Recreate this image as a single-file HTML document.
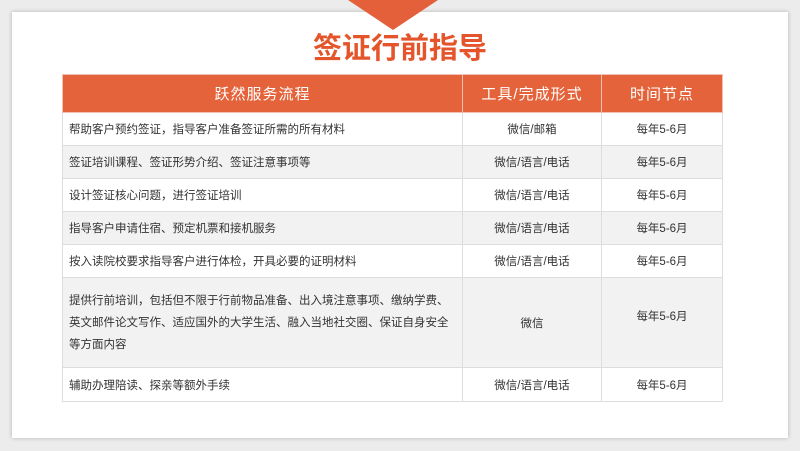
<!DOCTYPE html>
<html><head><meta charset="utf-8"><style>
body{margin:0;width:800px;height:451px;background:#ececec;position:relative;overflow:hidden;font-family:"Liberation Sans","Noto Sans CJK SC",sans-serif}
.card{position:absolute;left:12px;top:12px;width:776px;height:426px;background:#fff;box-shadow:0 0 4px rgba(0,0,0,.25)}
.tri{position:absolute;left:348px;top:0;width:0;height:0;border-left:45px solid transparent;border-right:45px solid transparent;border-top:30px solid #e4603a}
h1{position:absolute;left:0;width:800px;top:32px;margin:0;text-align:center;font-size:29px;font-weight:bold;color:#e4552c;line-height:34px;letter-spacing:0px}
table{position:absolute;left:62px;top:74px;width:661px;border-collapse:collapse;font-size:11.5px;color:#333}
td,th{border:1px solid #ddd;padding:0 6px}
th{background:#e4633b;color:#fff;font-weight:normal;font-size:15px;height:37px;border-color:#f0c0b0;letter-spacing:1px}
td{height:32px}
td.c{text-align:center}
tr.g td{background:#f2f2f2}
</style></head><body>
<div class="card"></div>
<div class="tri"></div>
<h1>签证行前指导</h1>
<table>
<tr><th style="width:387px">跃然服务流程</th><th style="width:126px">工具/完成形式</th><th>时间节点</th></tr>
<tr><td>帮助客户预约签证，指导客户准备签证所需的所有材料</td><td class="c">微信/邮箱</td><td class="c">每年5-6月</td></tr>
<tr class="g"><td>签证培训课程、签证形势介绍、签证注意事项等</td><td class="c">微信/语言/电话</td><td class="c">每年5-6月</td></tr>
<tr><td>设计签证核心问题，进行签证培训</td><td class="c">微信/语言/电话</td><td class="c">每年5-6月</td></tr>
<tr class="g"><td>指导客户申请住宿、预定机票和接机服务</td><td class="c">微信/语言/电话</td><td class="c">每年5-6月</td></tr>
<tr><td>按入读院校要求指导客户进行体检，开具必要的证明材料</td><td class="c">微信/语言/电话</td><td class="c">每年5-6月</td></tr>
<tr class="g"><td style="height:89px;line-height:22px">提供行前培训，包括但不限于行前物品准备、出入境注意事项、缴纳学费、英文邮件论文写作、适应国外的大学生活、融入当地社交圈、保证自身安全等方面内容</td><td class="c">微信</td><td class="c" style="vertical-align:top;padding-top:30px">每年5-6月</td></tr>
<tr><td style="height:33px">辅助办理陪读、探亲等额外手续</td><td class="c">微信/语言/电话</td><td class="c">每年5-6月</td></tr>
</table>
</body></html>
